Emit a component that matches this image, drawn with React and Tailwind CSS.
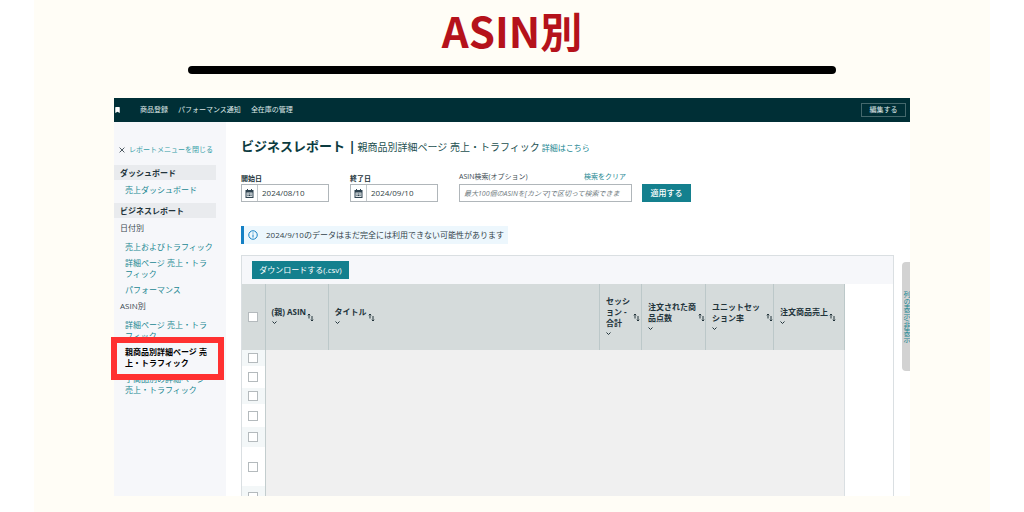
// src/App.jsx
import React from 'react';
import { FaBookmark } from 'react-icons/fa';

const NAV_ITEMS = ['商品登録', 'パフォーマンス通知', '全在庫の管理'];

const COLUMNS = [
  { label: '(親) ASIN', width: 'w-[63px]' },
  { label: 'タイトル', width: '' },
  { label: 'セッション - 合計', width: 'w-[42px]', narrow: true },
  { label: '注文された商品点数', width: 'w-[64px]' },
  { label: 'ユニットセッション率', width: 'w-[68px]' },
  { label: '注文商品売上', width: 'w-[71px]' },
];

const ROWS = [
  { height: 'h-4', tinted: true },
  { height: 'h-[22px]', tinted: false },
  { height: 'h-4', tinted: true },
  { height: 'h-[23px]', tinted: false },
  { height: 'h-5', tinted: true },
  { height: 'h-[39px]', tinted: false },
];

function SortIcon() {
  return (
    <svg viewBox="0 0 14 18" className="w-[7px] h-[9px] shrink-0" fill="none" stroke="#23343b" strokeWidth="2">
      <path d="M4 11V2M1.5 4.5L4 2l2.5 2.5" />
      <path d="M10 6v10M7.5 13.5L10 16l2.5-2.5" />
    </svg>
  );
}

function ChevronIcon() {
  return (
    <svg viewBox="0 0 10 6" className="w-[5px] h-[3px] my-1" fill="none" stroke="#23343b" strokeWidth="2">
      <path d="M1 1l4 4 4-4" />
    </svg>
  );
}

function CalendarIcon() {
  return (
    <svg viewBox="0 0 18 18" className="w-[9px] h-[9px]">
      <path fill="#2f4350" d="M1 2h3V0h2v2h6V0h2v2h3v16H1z" />
      <path fill="#dfe4e7" d="M3 7h12v9H3z" />
      <path fill="#2f4350" d="M5 9h2v2H5zM8 9h2v2H8zM11 9h2v2h-2zM5 12h2v2H5zM8 12h2v2H8zM11 12h2v2h-2z" />
    </svg>
  );
}

function CheckBox({ label }) {
  return (
    <input
      type="checkbox"
      aria-label={label}
      className="block mx-auto size-[10px] appearance-none border border-[#b4babd] bg-white"
    />
  );
}

function DateField({ id, label, value }) {
  return (
    <div className="w-[88px]">
      <label htmlFor={id} className="block text-[7px] leading-[10px] font-bold text-[#23343b]">{label}</label>
      <div className="flex h-[18px] border border-[#b0b6ba] bg-white">
        <span className="flex w-4 shrink-0 items-center justify-center border-r border-[#c4c9cc]">
          <CalendarIcon />
        </span>
        <input id={id} type="text" defaultValue={value} className="min-w-0 flex-1 px-1 text-[8px] text-[#333f46]" />
      </div>
    </div>
  );
}

function SideHeading({ children }) {
  return (
    <h2 className="mr-2.5 h-[15px] bg-[#e9ebee] pl-1.5 text-[8px] leading-[15px] font-bold text-[#23343b]">{children}</h2>
  );
}

function SideLink({ children, className = '' }) {
  return (
    <a href="#" className={`block w-[86px] text-[8px] leading-[11px] ${className}`}>{children}</a>
  );
}

function Sidebar() {
  return (
    <aside className="w-[112px] shrink-0 bg-[#f6f7fa] text-[#1b8792]">
      <button type="button" className="mt-[22px] ml-[5px] flex h-[11px] items-center gap-1 text-[7px] leading-[11px] text-[#37a0a8]">
        <svg viewBox="0 0 10 10" className="size-[6px]" stroke="#3c4a52" strokeWidth="1.5">
          <path d="M1 1l8 8M9 1l-8 8" />
        </svg>
        レポートメニューを閉じる
      </button>

      <nav className="mt-2.5">
        <SideHeading>ダッシュボード</SideHeading>
        <div className="pt-1 pb-2 pl-[11px]">
          <SideLink>売上ダッシュボード</SideLink>
        </div>

        <SideHeading>ビジネスレポート</SideHeading>
        <h3 className="mt-1 pl-1.5 text-[8px] leading-[11px] text-[#3c4a52]">日付別</h3>
        <div className="flex flex-col gap-[5px] pt-2 pl-[11px]">
          <SideLink className="whitespace-nowrap">売上およびトラフィック</SideLink>
          <SideLink>詳細ページ 売上・トラフィック</SideLink>
          <SideLink>パフォーマンス</SideLink>
        </div>

        <h3 className="mt-[5px] pl-1.5 text-[8px] leading-[11px] text-[#3c4a52]">ASIN別</h3>
        <div className="flex flex-col gap-[5px] pt-2 pl-[11px]">
          <SideLink>詳細ページ 売上・トラフィック</SideLink>
          <div className="relative">
            <SideLink className="font-bold text-black">親商品別詳細ページ 売上・トラフィック</SideLink>
            {/* highlight frame around the selected report */}
            <div className="pointer-events-none absolute -top-[9px] -bottom-3 -left-3.5 z-10 w-[113px] border-6 border-[#ff3131]" />
          </div>
          <SideLink>子商品別の詳細ページ 売上・トラフィック</SideLink>
        </div>
      </nav>
    </aside>
  );
}

function Filters() {
  return (
    <form className="mt-[15px] flex items-end">
      <DateField id="start" label="開始日" value="2024/08/10" />
      <div className="ml-[21px]">
        <DateField id="end" label="終了日" value="2024/09/10" />
      </div>
      <div className="ml-[21px] w-[173px]">
        <div className="flex justify-between pr-1.5 pb-0.5 text-[7px] leading-[10px]">
          <label htmlFor="asin" className="text-[#3c4a52]">ASIN検索(オプション)</label>
          <a href="#" className="text-[#1b8792]">検索をクリア</a>
        </div>
        <input
          id="asin"
          type="text"
          placeholder="最大100個のASINを[カンマ]で区切って検索できます"
          className="block h-[18px] w-full border border-[#b0b6ba] bg-white pr-2.5 pl-1 text-[7px] italic placeholder:text-[#6f7a80]"
        />
      </div>
      <button type="button" className="ml-2.5 h-[18px] w-[49px] bg-[#14808e] text-[8px] leading-[18px] font-medium text-white">適用する</button>
    </form>
  );
}

function ReportTable() {
  return (
    <section className="mt-[11px] mr-4 border border-b-0 border-[#dadfe2]">
      <div className="flex h-7 items-center bg-[#f6f7fa] pl-2.5">
        <button type="button" className="h-[18px] w-[97px] bg-[#14808e] text-[8px] leading-[18px] text-white">ダウンロードする(.csv)</button>
      </div>
      <div className="pr-12">
        <table className="w-full table-fixed border-collapse">
          <thead>
            <tr className="h-[66px] bg-[#d5dbdb]">
              <th className="w-[23px] border-r border-[#bcc8c9]"><CheckBox label="すべて選択" /></th>
              {COLUMNS.map((column) => (
                <th key={column.label} className={`border-r border-[#bcc8c9] pl-1.5 text-left align-middle ${column.width}`}>
                  <div className="flex items-center gap-px text-[8px] leading-[11px] font-bold text-[#23343b]">
                    <div className={column.narrow ? 'w-[26px]' : ''}>
                      {column.label}
                      <ChevronIcon />
                    </div>
                    <SortIcon />
                  </div>
                </th>
              ))}
            </tr>
          </thead>
          <tbody>
            {ROWS.map((row, index) => (
              <tr key={index} className={row.height}>
                <td className={`border-r border-[#c3cdce] ${row.tinted ? 'bg-[#f3f7f8]' : 'bg-white'}`}>
                  <CheckBox label={`行 ${index + 1}`} />
                </td>
                {index === 0 && (
                  <td colSpan={6} rowSpan={7} className="border-r border-[#dadfe2] bg-[#f0f0f0]" />
                )}
              </tr>
            ))}
            {/* last row is cut off by the bottom of the window */}
            <tr>
              <td className="border-r border-[#c3cdce] bg-[#f3f7f8]">
                <div className="h-2.5 overflow-hidden pt-1.5"><CheckBox label="行 7" /></div>
              </td>
            </tr>
          </tbody>
        </table>
      </div>
    </section>
  );
}

function App() {
  return (
    <div className="bg-white font-['Open_Sans','Noto_Sans_CJK_JP',sans-serif]">
      <div className="mx-[34px] min-h-screen bg-[#fffdf6] pt-1 pb-4">
        <h1 className="text-center font-['Noto_Sans_CJK_JP',sans-serif] text-[42px] leading-[52px] font-bold text-[#b5121b]">ASIN別</h1>
        <div className="mx-[154px] mt-2.5 h-2 rounded-full bg-black" />

        <div className="mx-20 mt-6 bg-white">
          <header className="flex h-6 items-center bg-[#002f36] pr-1 text-[7px] text-[#dfe8e8]">
            <FaBookmark className="ml-px h-[6px] w-[5px] text-white" />
            <nav className="ml-5 flex flex-1 gap-2.5">
              {NAV_ITEMS.map((item) => (
                <a key={item} href="#">{item}</a>
              ))}
            </nav>
            <button type="button" className="h-[14px] w-[45px] border border-[#44686c] leading-3">編集する</button>
          </header>

          <div className="flex">
            <Sidebar />
            <main className="min-w-0 flex-1 pt-[15px] pl-[15px]">
              <div className="flex items-baseline gap-0.5 whitespace-nowrap leading-[18px]">
                <h2 className="text-[13px] font-bold text-[#0b3b40]">ビジネスレポート |</h2>
                <span className="text-[10px] text-[#23504f]">親商品別詳細ページ 売上・トラフィック</span>
                <a href="#" className="text-[8px] text-[#1b8792]">詳細はこちら</a>
              </div>

              <Filters />

              <div className="mt-6 flex h-[18px] w-fit items-center gap-2 border-l-3 border-[#1580c4] bg-[#edf7fd] pr-1 pl-1 text-[8px] whitespace-nowrap text-[#33434b]">
                <svg viewBox="0 0 20 20" className="size-[10px]" fill="none" stroke="#1580c4" strokeWidth="2">
                  <circle cx="10" cy="10" r="8.5" />
                  <path d="M10 9v6M10 5v2" />
                </svg>
                2024/9/10のデータはまだ完全には利用できない可能性があります
              </div>

              <ReportTable />
            </main>
            <button
              type="button"
              className="mt-[140px] -ml-2 h-[109px] w-2 overflow-hidden rounded-l-sm bg-[#d2d2d2] text-[7px] leading-2 whitespace-nowrap text-[#1b8792] [writing-mode:vertical-rl]"
            >
              列の表示/非表示
            </button>
          </div>
        </div>
      </div>
    </div>
  );
}

export default App;
